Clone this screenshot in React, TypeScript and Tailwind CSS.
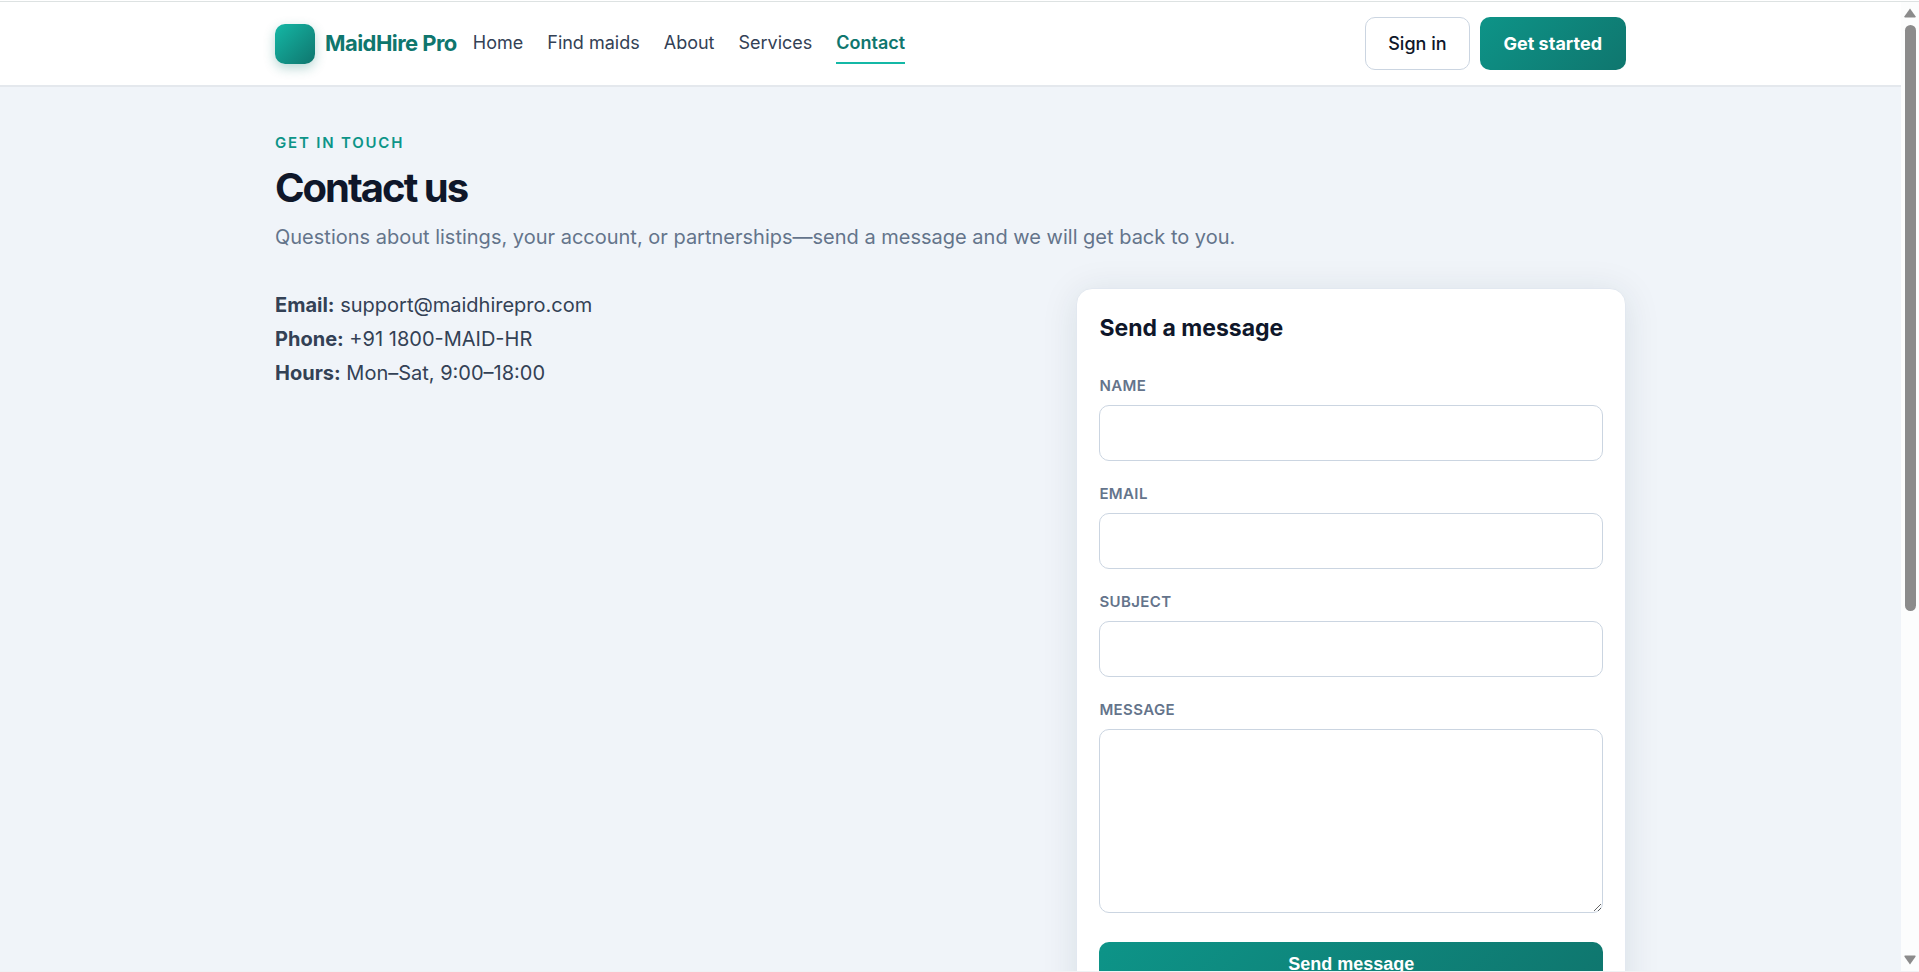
import React from 'react';

const navLinks = [
    { label: 'Home', href: '#home' },
    { label: 'Find maids', href: '#maids' },
    { label: 'About', href: '#about' },
    { label: 'Services', href: '#services' },
    { label: 'Contact', href: '#contact', active: true },
];

const contactDetails = [
    { label: 'Email', value: 'support@maidhirepro.com' },
    { label: 'Phone', value: '+91 1800-MAID-HR' },
    { label: 'Hours', value: 'Mon–Sat, 9:00–18:00' },
];

const fields = [
    { id: 'name', label: 'Name', type: 'text' },
    { id: 'email', label: 'Email', type: 'email' },
    { id: 'subject', label: 'Subject', type: 'text' },
];

const Header = () => (
    <header className="border-b-2 border-[#e4e8ed] bg-white">
        <div className="mx-auto flex h-[83px] max-w-[1351px] items-center justify-between">
            <div className="flex items-center gap-4">
                <a href="#home" className="flex items-center gap-[10px]">
                    <span className="size-10 rounded-[10px] bg-linear-135 from-[#14b8a6] to-[#0f766e] shadow-[0_4px_12px_rgba(15,118,110,0.3)]" />
                    <span className="text-[22px] font-bold tracking-tight text-[#0f766e]">MaidHire Pro</span>
                </a>
                <nav className="flex items-center gap-6 text-[18px] leading-[27px]">
                    {navLinks.map(link => (
                        <a
                            key={link.label}
                            href={link.href}
                            className={
                                link.active
                                    ? 'border-b-2 border-[#14b8a6] py-[6px] font-semibold text-[#0f766e]'
                                    : 'border-b-2 border-transparent py-[6px] text-[#334155]'
                            }
                        >
                            {link.label}
                        </a>
                    ))}
                </nav>
            </div>
            <div className="flex items-center gap-[10px] text-[18px]">
                <a href="#signin" className="flex h-[53px] items-center rounded-[10px] border border-[#cbd5e1] px-[22px] font-medium text-[#0f172a]">
                    Sign in
                </a>
                <a href="#start" className="flex h-[53px] items-center rounded-[10px] bg-linear-135 from-[#0d9488] to-[#0f766e] px-6 font-bold text-white">
                    Get started
                </a>
            </div>
        </div>
    </header>
);

const ContactForm = () => (
    <form className="rounded-[16px] border border-[#e2e8f0] bg-white p-[22px] pt-5 shadow-[0_4px_36px_rgba(15,50,60,0.1)]">
        <h2 className="mb-7 text-[23px] leading-[38px] font-bold text-[#0f172a]">Send a message</h2>
        {fields.map(field => (
            <div key={field.id} className="mb-[22px]">
                <label htmlFor={field.id} className="mb-2 block text-[15px] leading-[22px] font-semibold tracking-wide text-[#64748b] uppercase">
                    {field.label}
                </label>
                <input
                    id={field.id}
                    type={field.type}
                    className="block h-[56px] w-full rounded-[10px] border border-[#cbd5e1] bg-white px-4 text-[18px] text-[#0f172a] outline-none"
                />
            </div>
        ))}
        <label htmlFor="message" className="mb-2 block text-[15px] leading-[22px] font-semibold tracking-wide text-[#64748b] uppercase">
            Message
        </label>
        <textarea
            id="message"
            className="mb-[29px] block h-[184px] w-full resize-y rounded-[10px] border border-[#cbd5e1] bg-white px-4 py-3 text-[18px] text-[#0f172a] outline-none"
        />
        <button
            type="button"
            className="block h-[44px] w-full rounded-[10px] bg-linear-135 from-[#0d9488] to-[#0f766e] font-['Liberation_Sans',Arial,sans-serif] text-[18px] font-bold text-white"
        >
            Send message
        </button>
    </form>
);

const Scrollbar = () => (
    <div aria-hidden="true" className="flex w-[18px] shrink-0 flex-col items-center justify-between bg-[#fcfdfd] py-[6px]">
        <svg width="12" height="10" viewBox="0 0 12 10" fill="#8b8b8b">
            <path d="M6 0.5 11.5 8.2Q12 9.5 10.8 9.5H1.2Q0 9.5 .5 8.2Z" />
        </svg>
        <div className="flex w-full flex-1 justify-center pt-[7px]">
            <div className="h-[63%] w-[11px] rounded-full bg-[#8b8b8b]" />
        </div>
        <svg width="12" height="10" viewBox="0 0 12 10" fill="#8b8b8b">
            <path d="M6 9.5 .5 1.8Q0 .5 1.2 .5H10.8Q12 .5 11.5 1.8Z" />
        </svg>
    </div>
);

export default function App() {
    return (
        <div className="flex h-screen flex-col border-b border-[#f0f2f4] bg-white pt-px font-['Inter',sans-serif]">
            <div className="flex min-h-0 flex-1 border-t border-[#dde2e2]">
                <div className="min-w-0 flex-1 overflow-y-auto bg-[#f0f4f9] [scrollbar-width:none]">
                    <Header />
                    <main className="mx-auto max-w-[1351px] pt-11 pb-16">
                        <p className="text-[15px] leading-[24px] font-semibold tracking-[0.12em] text-[#0d9488] uppercase">Get in touch</p>
                        <h1 className="mt-2 text-[40px] leading-[50px] font-bold tracking-tighter text-[#0f172a]">Contact us</h1>
                        <p className="mt-2 text-[20px] leading-[32px] text-[#64748b]">
                            Questions about listings, your account, or partnerships—send a message and we will get back to you.
                        </p>
                        <div className="mt-[35px] grid grid-cols-[1.4fr_1fr] items-start gap-8">
                            <ul className="text-[20px] leading-[34px] text-[#334155]">
                                {contactDetails.map(item => (
                                    <li key={item.label}>
                                        <strong className="font-bold">{item.label}:</strong> {item.value}
                                    </li>
                                ))}
                            </ul>
                            <ContactForm />
                        </div>
                    </main>
                </div>
                <Scrollbar />
            </div>
        </div>
    );
}
